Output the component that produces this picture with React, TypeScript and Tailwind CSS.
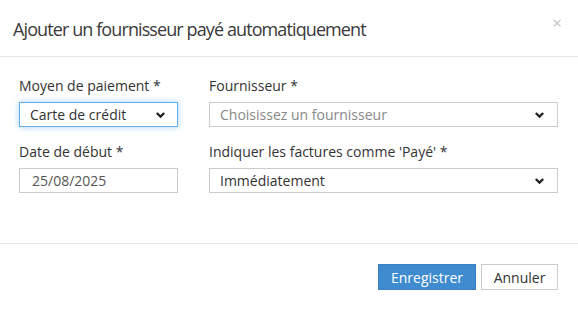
import React from 'react';

const Chevron: React.FC = () => (
  <svg width="11" height="8" viewBox="0 0 11 8" className="shrink-0">
    <path d="M1.8 2 L5.5 5.6 L9.2 2" fill="none" stroke="#222" strokeWidth="2.3" />
  </svg>
);

const App: React.FC = () => {
  return (
    <div className="w-[578px] h-[310px] bg-white text-[#333] font-['Open_Sans',sans-serif] flex flex-col">
      {/* header */}
      <div className="h-[57px] border-b border-[#e5e5e5] flex items-center justify-between pl-[13px] pr-[16px]">
        <h4 className="text-[18px] tracking-[-0.9px] leading-none text-[#3a3a3a] mt-[1px]">
          Ajouter un fournisseur payé automatiquement
        </h4>
        <button className="text-[#c4c4c4] text-[17px] leading-none -mt-[12px]">×</button>
      </div>

      {/* body */}
      <div className="h-[187px] border-b border-[#e5e5e5] pt-[20px] pl-[19px] flex flex-col gap-[16px]">
        <div className="flex gap-[31px]">
          <div className="w-[159px] flex flex-col gap-[7px]">
            <label className="text-[14px] leading-[18px]">Moyen de paiement *</label>
            <div className="h-[25px] border border-[#66afe9] shadow-[0_0_6px_rgba(102,175,233,0.6)] flex items-center justify-between pl-[10px] pr-[11px] text-[14px]">
              <span>Carte de crédit</span>
              <Chevron />
            </div>
          </div>
          <div className="w-[349px] flex flex-col gap-[7px]">
            <label className="text-[14px] leading-[18px]">Fournisseur *</label>
            <div className="h-[25px] border border-[#ccc] flex items-center justify-between pl-[10px] pr-[12px] text-[14px] text-[#888]">
              <span>Choisissez un fournisseur</span>
              <Chevron />
            </div>
          </div>
        </div>

        <div className="flex gap-[31px]">
          <div className="w-[159px] flex flex-col gap-[7px]">
            <label className="text-[14px] leading-[18px]">Date de début *</label>
            <div className="h-[25px] border border-[#ccc] flex items-center pl-[12px] text-[14px] text-[#555]">
              25/08/2025
            </div>
          </div>
          <div className="w-[349px] flex flex-col gap-[7px]">
            <label className="text-[14px] leading-[18px]">Indiquer les factures comme 'Payé' *</label>
            <div className="h-[25px] border border-[#ccc] flex items-center justify-between pl-[10px] pr-[12px] text-[14px]">
              <span>Immédiatement</span>
              <Chevron />
            </div>
          </div>
        </div>
      </div>

      {/* footer */}
      <div className="flex justify-end gap-[5px] pt-[20px] pr-[20px]">
        <button className="h-[26px] w-[98px] bg-[#3e8bcf] border border-[#3a80c0] text-white text-[14px]">Enregistrer</button>
        <button className="h-[26px] w-[77px] bg-white border border-[#ccc] text-[#333] text-[14px]">Annuler</button>
      </div>
    </div>
  );
};

export default App;
